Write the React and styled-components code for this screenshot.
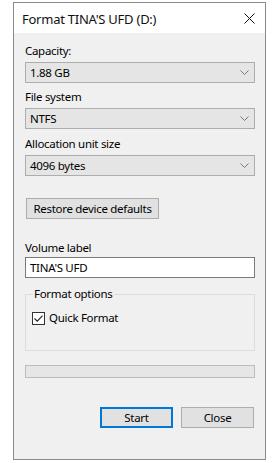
import React from 'react';
import styled, { createGlobalStyle } from 'styled-components';

const Global = createGlobalStyle`
  html, body {
    margin: 0;
    padding: 0;
    background: #ffffff;
  }
  body {
    font-family: "Noto Sans", "Open Sans", sans-serif;
    font-size: 11.5px;
    letter-spacing: -0.3px;
    color: #000;
  }
`;

const Window = styled.div`
  box-sizing: border-box;
  margin: 2px 0 0 13px;
  width: 253px;
  height: 458px;
  border: 1px solid #8a8a8a;
  background: #f0f0f0;
  display: flex;
  flex-direction: column;
`;

const TitleBar = styled.div`
  height: 30px;
  background: #ffffff;
  display: flex;
  align-items: center;
  justify-content: space-between;
  padding: 0 10px 0 8px;
`;

const Title = styled.span`
  font-size: 13px;
  letter-spacing: -0.25px;
  line-height: 16px;
  margin-top: 1px;
  color: #111;
`;

const CloseIcon = () => (
  <svg width="11" height="11" viewBox="0 0 11 11" style={{ display: 'block' }}>
    <path d="M0.5 0.5 L10.5 10.5 M10.5 0.5 L0.5 10.5" stroke="#111" strokeWidth="1" fill="none" />
  </svg>
);

const Body = styled.div`
  padding: 0 10px 0 11px;
  display: flex;
  flex-direction: column;
`;

const Label = styled.div`
  line-height: 16px;
  margin-top: ${p => p.$top}px;
`;

const Combo = styled.div`
  box-sizing: border-box;
  height: 21px;
  margin-top: 3px;
  border: 1px solid #adadad;
  background: #e5e5e5;
  display: flex;
  align-items: center;
  justify-content: space-between;
  padding: 0 5px 0 4px;
  line-height: 16px;
`;

const Chevron = () => (
  <svg width="9" height="5" viewBox="0 0 9 5" style={{ display: 'block' }}>
    <path d="M0.5 0.5 L4.5 4.5 L8.5 0.5" stroke="#777" strokeWidth="1" fill="none" />
  </svg>
);

const Button = styled.button`
  box-sizing: border-box;
  height: 21px;
  width: ${p => p.$width}px;
  padding: 0;
  font: inherit;
  letter-spacing: inherit;
  color: #000;
  line-height: 16px;
  background: #e1e1e1;
  border: ${p => (p.$default ? '2px solid #0078d7' : '1px solid #adadad')};
  border-radius: 0;
`;

const RestoreButton = styled(Button)`
  margin: 22px 0 0 1px;
  align-self: flex-start;
`;

const TextInput = styled.div`
  box-sizing: border-box;
  height: 21px;
  margin-top: 1px;
  border: 1px solid #7a7a7a;
  background: #ffffff;
  padding: 0 4px;
  display: flex;
  align-items: center;
  line-height: 16px;
`;

const Group = styled.fieldset`
  margin: 8px 0 0;
  padding: 0 6px;
  min-width: 0;
  border: 1px solid #dcdcdc;
`;

const Legend = styled.legend`
  padding: 0 1px;
  margin-left: 1px;
  line-height: 16px;
`;

const GroupInner = styled.div`
  height: 48px;
  display: flex;
  flex-direction: column;
`;

const CheckRow = styled.div`
  margin-top: 9px;
  display: flex;
  align-items: center;
  gap: 4px;
  line-height: 14px;
`;

const CheckBox = styled.span`
  box-sizing: border-box;
  width: 13px;
  height: 13px;
  border: 1px solid #333;
  background: #fff;
  display: flex;
  align-items: center;
  justify-content: center;
`;

const Progress = styled.div`
  box-sizing: border-box;
  height: 13px;
  margin-top: 14px;
  border: 1px solid #bcbcbc;
  background: #e6e6e6;
`;

const Footer = styled.div`
  margin-top: 29px;
  padding-right: 1px;
  display: flex;
  justify-content: flex-end;
  gap: 8px;
`;

const fields = [
  { label: 'Capacity:', value: '1.88 GB', top: 10 },
  { label: 'File system', value: 'NTFS', top: 6 },
  { label: 'Allocation unit size', value: '4096 bytes', top: 7 },
];

export default function App() {
  return (
    <>
      <Global />
      <Window>
        <TitleBar>
          <Title>Format TINA'S UFD (D:)</Title>
          <CloseIcon />
        </TitleBar>
        <Body>
          {fields.map(f => (
            <React.Fragment key={f.label}>
              <Label $top={f.top}>{f.label}</Label>
              <Combo>
                <span>{f.value}</span>
                <Chevron />
              </Combo>
            </React.Fragment>
          ))}
          <RestoreButton $width={133}>Restore device defaults</RestoreButton>
          <Label $top={21}>Volume label</Label>
          <TextInput>TINA'S UFD</TextInput>
          <Group>
            <Legend>Format options</Legend>
            <GroupInner>
              <CheckRow>
                <CheckBox>
                  <svg width="9" height="7" viewBox="0 0 9 7" style={{ display: 'block' }}>
                    <path d="M0.5 3.5 L3.3 6.2 L8.5 0.7" stroke="#222" strokeWidth="1.1" fill="none" />
                  </svg>
                </CheckBox>
                <span>Quick Format</span>
              </CheckRow>
            </GroupInner>
          </Group>
          <Progress />
          <Footer>
            <Button $width={73} $default>Start</Button>
            <Button $width={73}>Close</Button>
          </Footer>
        </Body>
      </Window>
    </>
  );
}
